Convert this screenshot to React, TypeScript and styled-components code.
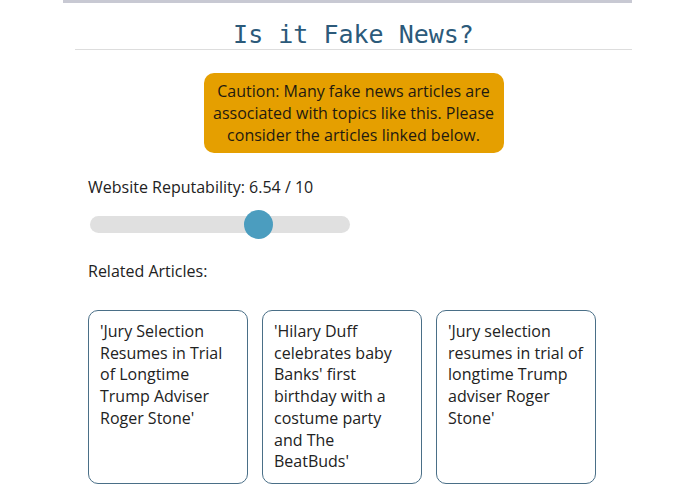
import styled, { createGlobalStyle } from "styled-components";

const GlobalStyle = createGlobalStyle`
  body {
    margin: 0;
    background: #ffffff;
    font-family: "Open Sans", "Noto Sans", sans-serif;
    color: #222222;
  }
`;

const Page = styled.div`
  width: 569px;
  margin: 0 auto;
  border-top: 3px solid #c8c9d3;
`;

const Inner = styled.div`
  margin-left: 12px;
`;

const Header = styled.h1`
  margin: 0;
  padding-top: 18px;
  font-family: "DejaVu Sans Mono", "Liberation Mono", monospace;
  font-weight: normal;
  font-size: 25px;
  line-height: 28px;
  text-align: center;
  color: #2c5a7a;
  border-bottom: 1px solid #dddddd;
`;

const Content = styled.div`
  display: flex;
  flex-direction: column;
  padding: 0 13px;
`;

const Caution = styled.div`
  align-self: center;
  width: 300px;
  box-sizing: border-box;
  margin-top: 23px;
  padding: 7px 8px;
  background: #e59f00;
  border-radius: 10px;
  text-align: center;
  font-size: 16px;
  line-height: 22px;
  color: #1f1a10;
`;

const Label = styled.div<{ $top: number }>`
  margin-top: ${(p) => p.$top}px;
  font-size: 16px;
  line-height: 22px;
`;

const SliderTrack = styled.div`
  position: relative;
  width: 260px;
  height: 17px;
  margin: 18px 0 6px 2px;
  background: #e0e0e0;
  border-radius: 9px;
`;

const SliderThumb = styled.div`
  position: absolute;
  top: -6px;
  width: 29px;
  height: 29px;
  border-radius: 50%;
  background: #4b9dbf;
`;

const Cards = styled.div`
  display: flex;
  gap: 14px;
  margin-top: 28px;
`;

const Card = styled.div`
  width: 160px;
  height: 174px;
  box-sizing: border-box;
  padding: 10px 11px;
  border: 1px solid #4a6f87;
  border-radius: 10px;
  font-size: 16px;
  line-height: 21.7px;
  color: #222222;
`;

const articles = [
  "'Jury Selection Resumes in Trial of Longtime Trump Adviser Roger Stone'",
  "'Hilary Duff celebrates baby Banks' first birthday with a costume party and The BeatBuds'",
  "'Jury selection resumes in trial of longtime Trump adviser Roger Stone'",
];

const score = 6.54;

const App = () => {
  return (
    <>
      <GlobalStyle />
      <Page>
        <Inner>
          <Header>Is it Fake News?</Header>
          <Content>
            <Caution>
              Caution: Many fake news articles are associated with topics like
              this. Please consider the articles linked below.
            </Caution>
            <Label $top={23}>Website Reputability: {score} / 10</Label>
            <SliderTrack>
              <SliderThumb style={{ left: `calc(${score * 10}% - 16px)` }} />
            </SliderTrack>
            <Label $top={21}>Related Articles:</Label>
            <Cards>
              {articles.map((a) => (
                <Card key={a}>{a}</Card>
              ))}
            </Cards>
          </Content>
        </Inner>
      </Page>
    </>
  );
};

export default App;
